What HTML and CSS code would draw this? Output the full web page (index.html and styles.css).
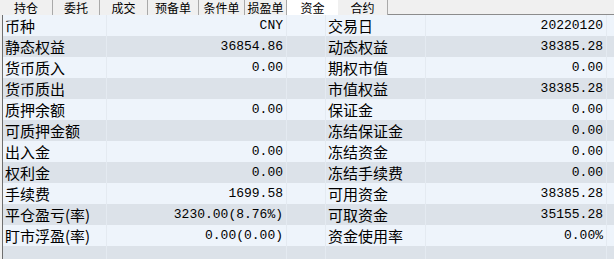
FILE: index.html
```html
<!DOCTYPE html>
<html lang="zh-CN">
<head>
    <meta charset="UTF-8">
    <title>资金</title>
    <link rel="stylesheet" href="styles.css">
</head>
<body>
    <div class="tabs">
        <div class="tab t1">持仓</div>
        <div class="tab t2">委托</div>
        <div class="tab t3">成交</div>
        <div class="tab t4">预备单</div>
        <div class="tab t5">条件单</div>
        <div class="tab t6">损盈单</div>
        <div class="tab t7 active">资金</div>
        <div class="tab t8">合约</div>
        <div class="tab-rest"></div>
    </div>
    <div class="grid">
        <div class="row"><span class="lbl">币种</span><span class="val">CNY</span><span class="gap"></span><span class="lbl">交易日</span><span class="val">20220120</span><span class="end"></span></div>
        <div class="row"><span class="lbl">静态权益</span><span class="val">36854.86</span><span class="gap"></span><span class="lbl">动态权益</span><span class="val">38385.28</span><span class="end"></span></div>
        <div class="row"><span class="lbl">货币质入</span><span class="val">0.00</span><span class="gap"></span><span class="lbl">期权市值</span><span class="val">0.00</span><span class="end"></span></div>
        <div class="row"><span class="lbl">货币质出</span><span class="val"></span><span class="gap"></span><span class="lbl">市值权益</span><span class="val">38385.28</span><span class="end"></span></div>
        <div class="row"><span class="lbl">质押余额</span><span class="val">0.00</span><span class="gap"></span><span class="lbl">保证金</span><span class="val">0.00</span><span class="end"></span></div>
        <div class="row"><span class="lbl">可质押金额</span><span class="val"></span><span class="gap"></span><span class="lbl">冻结保证金</span><span class="val">0.00</span><span class="end"></span></div>
        <div class="row"><span class="lbl">出入金</span><span class="val">0.00</span><span class="gap"></span><span class="lbl">冻结资金</span><span class="val">0.00</span><span class="end"></span></div>
        <div class="row"><span class="lbl">权利金</span><span class="val">0.00</span><span class="gap"></span><span class="lbl">冻结手续费</span><span class="val">0.00</span><span class="end"></span></div>
        <div class="row"><span class="lbl">手续费</span><span class="val">1699.58</span><span class="gap"></span><span class="lbl">可用资金</span><span class="val">38385.28</span><span class="end"></span></div>
        <div class="row"><span class="lbl">平仓盈亏(率)</span><span class="val">3230.00(8.76%)</span><span class="gap"></span><span class="lbl">可取资金</span><span class="val">35155.28</span><span class="end"></span></div>
        <div class="row"><span class="lbl">盯市浮盈(率)</span><span class="val">0.00(0.00)</span><span class="gap"></span><span class="lbl">资金使用率</span><span class="val">0.00%</span><span class="end"></span></div>
        <div class="row"><span class="lbl"></span><span class="val"></span><span class="gap"></span><span class="lbl"></span><span class="val"></span><span class="end"></span></div>
    </div>
</body>
</html>
```

FILE: styles.css
```css
body {
    margin: 0;
    background-color: #f0f0f0;
    font-family: "Noto Sans CJK SC", sans-serif;
    color: #000;
    overflow: hidden;
}
.tabs {
    display: flex;
    height: 15px;
}
.tab {
    height: 15px;
    box-sizing: border-box;
    border-right: 1px solid #a9a9a9;
    background-color: #f0f0f0;
    font-size: 12px;
    line-height: 15px;
    text-align: center;
}
.t1 { width: 53px; }
.t2 { width: 47px; }
.t3 { width: 48px; }
.t4 { width: 51px; }
.t5 { width: 46px; }
.t6 { width: 42px; }
.t7 { width: 51px; }
.t8 { width: 50px; }
.tab.active {
    background-color: #fff;
    border-right: none;
}
.tab-rest {
    flex: 1;
    border-bottom: 1px solid #8c8c8c;
    box-sizing: border-box;
}
.grid {
    margin-left: 2px;
    border-left: 1px solid #6e6e6e;
}
.row {
    display: grid;
    grid-template-columns: 104px 180px 39px 100px 181px 1fr;
    height: 21px;
    background-color: #eef4fb;
}
.row:nth-child(even) {
    background-color: #dce2e9;
}
.row span {
    border-right: 1px solid #e4eaf1;
    line-height: 21px;
    white-space: nowrap;
}
.row .end {
    border-right: none;
}
.lbl {
    padding-left: 2px;
    font-size: 15px;
}
.val {
    padding-right: 3px;
    text-align: right;
    font-family: "Liberation Mono", monospace;
    font-size: 13px;
}
```
